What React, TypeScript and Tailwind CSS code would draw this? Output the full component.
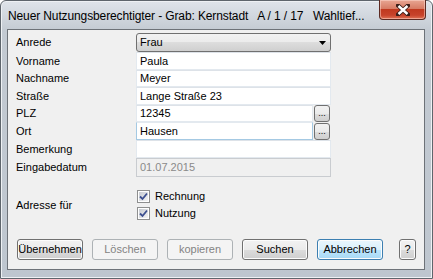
import React from 'react';

const font = { fontFamily: '"Liberation Sans", Arial, sans-serif' };

const btn =
  'h-[21px] rounded-[3px] border border-[#707070] bg-[linear-gradient(#f2f2f2_0%,#ebebeb_50%,#dddddd_50%,#cfcfcf_100%)] text-[11px] text-black flex items-center justify-center shadow-[inset_0_0_0_1px_#fcfcfc]';
const btnDisabled =
  'h-[21px] rounded-[3px] border border-[#adb2b5] bg-[#f4f4f4] text-[11px] text-[#838383] flex items-center justify-center';
const btnHot =
  'h-[21px] rounded-[3px] border border-[#3c7fb1] bg-[linear-gradient(#eaf6fd_0%,#d9f0fc_50%,#bee6fd_50%,#a7d9f5_100%)] text-[11px] text-black flex items-center justify-center shadow-[inset_0_0_0_1px_#fcfcfc]';

const Label: React.FC<{ text: string }> = ({ text }) => (
  <div className="w-[128px] shrink-0 pl-2 text-[11px] text-black leading-none">{text}</div>
);

const TextBox: React.FC<{ value?: string; focused?: boolean; className?: string }> = ({ value, focused, className }) => (
  <div
    className={`flex items-center h-full px-[3px] bg-white text-[11px] text-black border ${
      focused ? 'border-[#a4c9e3] border-t-[#e3e9ef]' : 'border-[#e3e9ef] border-t-[#dde2e8]'
    } ${className ?? ''}`}
  >
    {value}
  </div>
);

const DotsButton: React.FC = () => (
  <div className="ml-px w-[16px] h-[17px] rounded-[3px] border border-[#707070] bg-[linear-gradient(#f2f2f2_0%,#ebebeb_50%,#dddddd_50%,#cfcfcf_100%)] flex items-end justify-center pb-[3px] text-[9px] leading-none text-black">
    ...
  </div>
);

const CheckBox: React.FC<{ label: string }> = ({ label }) => (
  <div className="flex items-center h-[17px]">
    <div className="w-[13px] h-[13px] border border-[#8e8f8f] bg-white p-px">
      <div className="w-full h-full bg-[linear-gradient(135deg,#c6cad1,#f4f4f4)] flex items-center justify-center">
        <svg width="9" height="9" viewBox="0 0 9 9">
          <path d="M1 4.5 L3.5 7 L8 1.5" fill="none" stroke="#3c4f8f" strokeWidth="1.8" />
        </svg>
      </div>
    </div>
    <span className="ml-[5px] text-[11px] text-black">{label}</span>
  </div>
);

const App: React.FC = () => {
  return (
    <div style={font} className="w-[433px] h-[279px] overflow-hidden bg-white">
      <div className="w-[433px] h-[279px] flex flex-col rounded-t-[6px] border border-[#5e656c] bg-[linear-gradient(#dfe4ea,#c3cad2_30px,#bec6cf)] shadow-[inset_0_0_0_1px_#eef1f4]">
        {/* title bar */}
        <div className="h-[28px] shrink-0 flex items-start relative">
          <div className="pl-[7px] pt-[6px] text-[12px] tracking-[-0.12px] text-black whitespace-pre">
            Neuer Nutzungsberechtigter - Grab: Kernstadt   A / 1 / 17   Wahltief...
          </div>
          <div className="absolute right-[6px] -top-px w-[47px] h-[20px] rounded-b-[4px] border border-[#5c2a22] border-t-0 bg-[linear-gradient(#e8a693_0%,#d77c65_45%,#c0391f_50%,#c7432b_80%,#e07356_100%)] flex items-center justify-center shadow-[inset_0_0_0_1px_rgba(255,220,210,0.5)]">
            <svg width="14" height="12" viewBox="0 0 14 12">
              <path d="M2 1.5 L12 10.5 M12 1.5 L2 10.5" stroke="#3a1d18" strokeWidth="4.2" strokeLinecap="square" />
              <path d="M2.5 2 L11.5 10 M11.5 2 L2.5 10" stroke="#ffffff" strokeWidth="2.4" />
            </svg>
          </div>
        </div>

        {/* client area */}
        <div className="ml-[6px] mr-[7px] mb-[8px] flex-1 border border-[#6d7278] bg-[#f0f0f0] flex flex-col pt-[3px]">
          <div className="flex items-center h-[19px]">
            <Label text="Anrede" />
            <div className="w-[195px] h-full rounded-[3px] border border-[#707070] bg-[linear-gradient(#f2f2f2_0%,#ebebeb_50%,#dddddd_50%,#cfcfcf_100%)] flex items-center pl-[3px] pr-[4px] text-[11px] text-black">
              <span className="flex-1">Frau</span>
              <svg width="7" height="4" viewBox="0 0 7 4">
                <path d="M0 0 H7 L3.5 4 Z" fill="#000" />
              </svg>
            </div>
          </div>
          <div className="flex items-center h-[18px]">
            <Label text="Vorname" />
            <TextBox value="Paula" className="w-[195px]" />
          </div>
          <div className="flex items-center h-[17px]">
            <Label text="Nachname" />
            <TextBox value="Meyer" className="w-[195px]" />
          </div>
          <div className="flex items-center h-[18px]">
            <Label text="Straße" />
            <TextBox value="Lange Straße 23" className="w-[195px]" />
          </div>
          <div className="flex items-center h-[17px]">
            <Label text="PLZ" />
            <TextBox value="12345" className="w-[177px]" />
            <DotsButton />
          </div>
          <div className="flex items-center h-[18px]">
            <Label text="Ort" />
            <TextBox value="Hausen" focused className="w-[177px]" />
            <DotsButton />
          </div>
          <div className="flex items-center h-[18px]">
            <Label text="Bemerkung" />
            <TextBox className="w-[195px]" />
          </div>
          <div className="flex items-center h-[19px]">
            <Label text="Eingabedatum" />
            <div className="w-[195px] h-full flex items-center px-[3px] bg-[#f0f0f0] border border-[#c9ccd0] text-[11px] text-[#8a8a8a]">
              01.07.2015
            </div>
          </div>

          <div className="flex items-center mt-[11px]">
            <Label text="Adresse für" />
            <div className="flex flex-col pl-px">
              <CheckBox label="Rechnung" />
              <CheckBox label="Nutzung" />
            </div>
          </div>

          <div className="flex items-center mt-[17px] pl-[9px]">
            <div className={`${btn} w-[66px]`}>Übernehmen</div>
            <div className={`${btnDisabled} w-[66px] ml-[9px]`}>Löschen</div>
            <div className={`${btnDisabled} w-[66px] ml-[9px]`}>kopieren</div>
            <div className={`${btn} w-[66px] ml-[9px]`}>Suchen</div>
            <div className={`${btnHot} w-[66px] ml-[9px]`}>Abbrechen</div>
            <div className={`${btn} w-[17px] ml-[16px]`}>?</div>
          </div>
        </div>
      </div>
    </div>
  );
};

export default App;
